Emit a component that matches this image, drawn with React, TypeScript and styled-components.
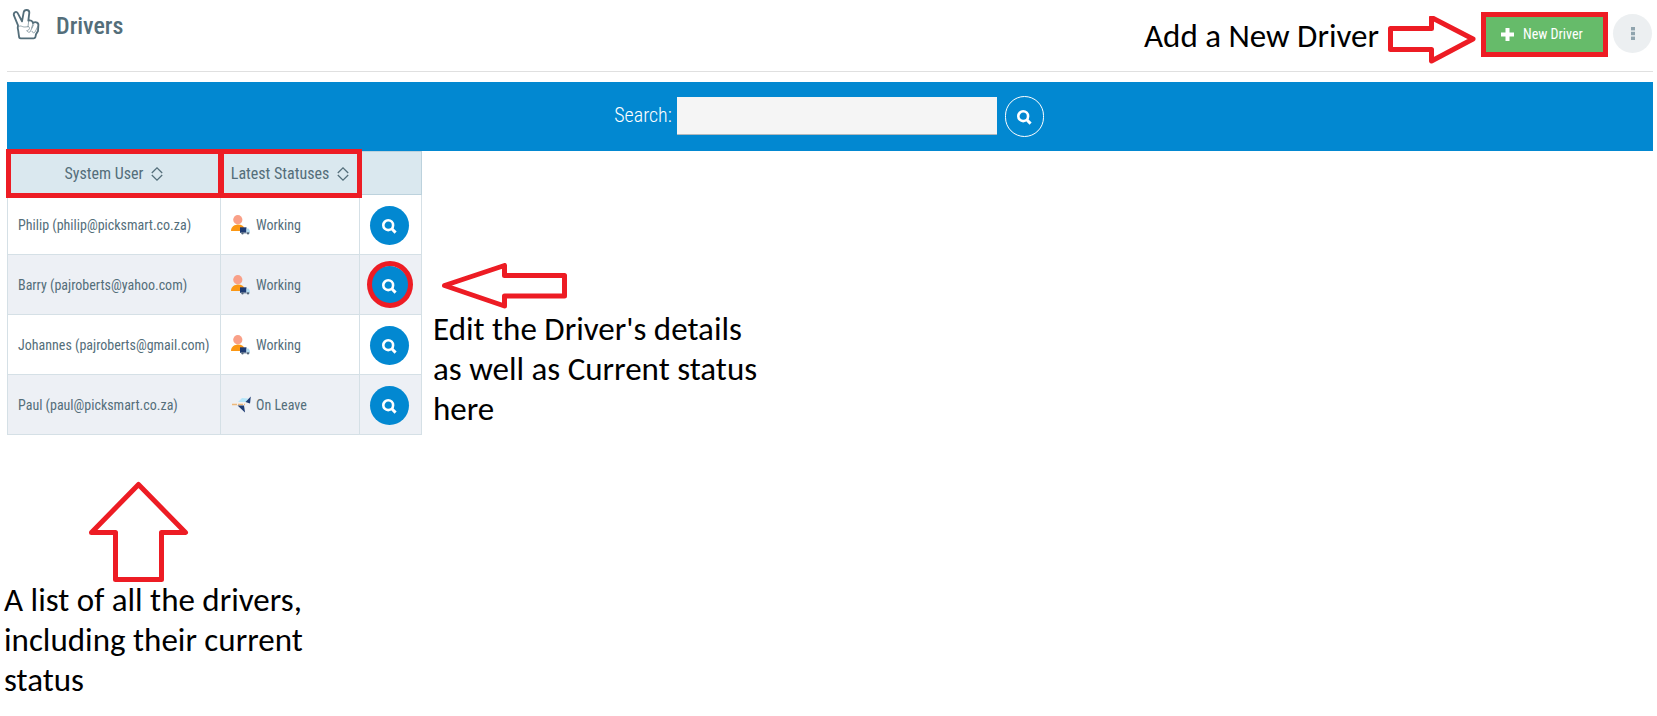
import React from "react";
import styled, { createGlobalStyle } from "styled-components";

const red = "#ed1c24";
const blue = "#0288d1";
const slate = "#546e7a";
const line = "#d5e0e6";

const GlobalStyle = createGlobalStyle`
  * { box-sizing: border-box; }
  body {
    margin: 0;
    background: #fff;
    color: ${slate};
    font: 400 14px/20px "Roboto Condensed", Roboto, sans-serif;
  }
`;

const Page = styled.main`
  padding-bottom: 8px;
`;

const Header = styled.header`
  display: flex;
  justify-content: space-between;
  align-items: flex-start;
  height: 72px;
  margin: 0 4px 10px 7px;
  border-bottom: 1px solid #e0e0e0;
`;

const Brand = styled.div`
  display: flex;
  gap: 16px;
  padding: 8px 0 0 5px;
`;

const Title = styled.h1`
  margin: 0;
  font-size: 24px;
  line-height: 36px;
  font-weight: 500;
`;

const Actions = styled.div`
  display: flex;
  align-items: flex-start;
  gap: 5px;
  padding-top: 12px;
`;

const Note = styled.p`
  margin: 0;
  color: #000;
  font: 400 33px/40px Carlito, Calibri, Lato, sans-serif;
`;

const HeaderNote = styled.div`
  display: flex;
  align-items: flex-start;
  gap: 9px;
  padding-top: 4px;
`;

const NewButton = styled.button`
  display: flex;
  align-items: center;
  gap: 9px;
  width: 127px;
  height: 45px;
  padding: 0 0 1px 15px;
  border: 5px solid ${red};
  background: #66bb6a;
  color: #fff;
  font: inherit;
`;

const MoreButton = styled.button`
  display: grid;
  place-items: center;
  width: 39px;
  height: 39px;
  margin: 2px 1px 0 0;
  padding: 0;
  border: 0;
  border-radius: 50%;
  background: #eceff1;
`;

const SearchBar = styled.form`
  display: flex;
  align-items: center;
  justify-content: center;
  height: 69px;
  margin: 0 4px 0 7px;
  padding: 0 2px 1px 0;
  background: ${blue};
`;

const SearchLabel = styled.label`
  padding-bottom: 3px;
  color: #fff;
  font-size: 20px;
  line-height: 24px;
  font-weight: 300;
`;

const SearchInput = styled.input`
  width: 320px;
  height: 38px;
  margin: 0 8px 0 5px;
  padding: 0 8px;
  border: 0;
  border-bottom: 1px solid #b0b8bd;
  border-radius: 0;
  background: #f5f5f5;
  font: inherit;
`;

const RoundButton = styled.button<{ $outlined?: boolean; $marked?: boolean }>`
  position: relative;
  display: grid;
  place-items: center;
  width: 39px;
  height: ${(p) => (p.$outlined ? 41 : 39)}px;
  padding: 2px 0 0;
  border: ${(p) => (p.$outlined ? "1px solid #fff" : "0")};
  border-radius: 20px;
  background: ${blue};
  color: #fff;
  &::after {
    content: "";
    display: ${(p) => (p.$marked ? "block" : "none")};
    position: absolute;
    inset: -5px -4px -3px -3px;
    border: 5px solid ${red};
    border-radius: 50%;
  }
`;

const Content = styled.div`
  display: flex;
  align-items: flex-start;
  gap: 11px;
  padding-left: 7px;
`;

const Table = styled.table`
  width: 415px;
  table-layout: fixed;
  border-collapse: collapse;
`;

const Col = styled.col<{ $w: number }>`
  width: ${(p) => p.$w}px;
`;

const HeadCell = styled.th<{ $marked?: boolean }>`
  position: relative;
  z-index: ${(p) => (p.$marked ? 1 : 0)};
  height: 43px;
  padding: 2px 0 0;
  border: 1px solid #bcd2dd;
  background: #dae8ef;
  font-size: 16px;
  font-weight: 400;
  &::after {
    content: "";
    display: ${(p) => (p.$marked ? "block" : "none")};
    position: absolute;
    inset: -3px -3px -4px -2px;
    border: 5px solid ${red};
  }
`;

const SortButton = styled.button`
  display: inline-flex;
  align-items: center;
  gap: 8px;
  padding: 0;
  border: 0;
  background: none;
  color: inherit;
  font: inherit;
`;

const Row = styled.tr`
  height: 60px;
  &:nth-child(even) {
    background: #edf0f5;
  }
`;

const Cell = styled.td`
  padding: 1px 10px 0;
  border: 1px solid ${line};
  white-space: nowrap;
`;

const Status = styled.span`
  display: flex;
  align-items: center;
  gap: 5px;
  padding-bottom: 1px;
`;

const EditNote = styled.aside`
  width: 335px;
  padding-top: 112px;
`;

const ListNote = styled.aside`
  width: 306px;
  padding: 47px 0 0 4px;
`;

const Arrow = styled.svg<{ $indent?: number }>`
  display: block;
  flex: none;
  margin-left: ${(p) => p.$indent ?? 0}px;
  fill: none;
  stroke: ${red};
  stroke-width: 5px;
  stroke-linejoin: round;
`;

const HandIcon = () => (
  <svg width="28" height="32" viewBox="36 24 84 96" fill="none" stroke={slate} strokeLinecap="round" strokeLinejoin="round" aria-hidden="true">
    <path strokeWidth="5.5" d="M54 76 L42 47 C39 38 49 30 54 41 L66 64 L71 37 C73 27 88 28 88 38 L85 62 C92 59 98 63 99 69 C108 63 117 69 115 78 L114 93 L108 103 L106 112 C105 115 103 115 101 115 H62 C58 115 57 113 57 109 L55 94 C53 88 52 83 54 76 Z" />
    <path strokeWidth="1.8" d="M56 80 C62 74 67 82 75 81 L86 80 C92 86 86 91 80 92 C83 96 86 98 90 96 L101 74 M86 64 L84 80 M99 70 L95 84 M114 78 L105 96 C102 100 97 99 96 94" />
  </svg>
);

const SearchIcon = () => (
  <svg width="15" height="15" viewBox="0 0 15 15" fill="none" stroke="currentColor" aria-hidden="true">
    <circle cx="6.2" cy="6.2" r="4.9" strokeWidth="2.6" />
    <path d="M9.8 9.8 L13.6 13.6" strokeWidth="3" />
  </svg>
);

const SortIcon = () => (
  <svg width="12" height="14" viewBox="0 0 12 14" fill="none" stroke="currentColor" strokeWidth="1.3" aria-hidden="true">
    <path d="M0.8 6 L6 0.9 L11.2 6 M0.8 8 L6 13.1 L11.2 8" />
  </svg>
);

const DriverIcon = () => (
  <svg width="20" height="20" viewBox="0 0 20 20" aria-hidden="true">
    <circle cx="6.8" cy="4.7" r="4.6" fill="#f9a088" />
    <path d="M0 16 C0 8 12.500 8 13 13 L9 13 V16 Z" fill="#fb9714" />
    <rect x="9" y="12.300" width="6.500" height="5.500" fill="#1d3b72" />
    <path d="M15.500 13.500 H17.500 L19 15.800 V18.300 H15.500 Z" fill="#b3ddf2" />
    <path d="M10 18 H18.500" stroke="#8b9bab" />
    <circle cx="11.500" cy="18.400" r="1.100" fill="#53657a" />
    <circle cx="17" cy="18.400" r="1.100" fill="#53657a" />
  </svg>
);

const PlaneIcon = () => (
  <svg width="20" height="20" viewBox="0 0 20 20" aria-hidden="true">
    <path d="M7 7 L11 3 L17 3.500 L15 7 Z" fill="#b5e6fa" />
    <path d="M0 9 C3 7 10 7.500 16 7 L19 6 C17 10 11 11.500 2 10.500 Z" fill="#f4f0ec" />
    <path d="M1 9.600 H14" stroke="#ecb87c" strokeWidth="1.500" strokeDasharray="5 1" />
    <path d="M19.800 1.500 L19 8.500 L14.500 7 Z" fill="#1d3b72" />
    <path d="M6.500 10.500 L13 10.500 L14 17.500 Z" fill="#1d3b72" />
  </svg>
);

const drivers = [
  { user: "Philip (philip@picksmart.co.za)", status: "Working" },
  { user: "Barry (pajroberts@yahoo.com)", status: "Working", marked: true },
  { user: "Johannes (pajroberts@gmail.com)", status: "Working" },
  { user: "Paul (paul@picksmart.co.za)", status: "On Leave" },
];

export default function App() {
  return (
    <Page>
      <GlobalStyle />
      <Header>
        <Brand>
          <HandIcon />
          <Title>Drivers</Title>
        </Brand>
        <Actions>
          <HeaderNote>
            <Note>Add a New Driver</Note>
            <Arrow width="88" height="48" viewBox="0 1 88 48" aria-hidden="true">
              <path d="M2.500 13.500 H43.500 V2.500 L85 24 L43.500 46 V34.500 H2.500 Z" />
            </Arrow>
          </HeaderNote>
          <NewButton type="button">
            <svg width="13" height="13" viewBox="0 0 13 13" stroke="currentColor" strokeWidth="4" aria-hidden="true">
              <path d="M6.500 0 V13 M0 6.500 H13" />
            </svg>
            New Driver
          </NewButton>
          <MoreButton type="button" aria-label="More options">
            <svg width="4" height="13" viewBox="0 0 4 13" fill="#90a4ae" aria-hidden="true">
              <rect width="4" height="3.400" />
              <rect y="4.800" width="4" height="3.400" />
              <rect y="9.600" width="4" height="3.400" />
            </svg>
          </MoreButton>
        </Actions>
      </Header>
      <SearchBar role="search" onSubmit={(e) => e.preventDefault()}>
        <SearchLabel htmlFor="search">Search:</SearchLabel>
        <SearchInput id="search" type="text" />
        <RoundButton type="submit" $outlined aria-label="Search">
          <SearchIcon />
        </RoundButton>
      </SearchBar>
      <Content>
        <Table>
          <colgroup>
            <Col $w={213} />
            <Col $w={139} />
            <Col $w={62} />
          </colgroup>
          <thead>
            <tr>
              <HeadCell $marked>
                <SortButton type="button">System User <SortIcon /></SortButton>
              </HeadCell>
              <HeadCell $marked>
                <SortButton type="button">Latest Statuses <SortIcon /></SortButton>
              </HeadCell>
              <HeadCell aria-label="Details" />
            </tr>
          </thead>
          <tbody>
            {drivers.map((d) => (
              <Row key={d.user}>
                <Cell>{d.user}</Cell>
                <Cell>
                  <Status>
                    {d.status === "Working" ? <DriverIcon /> : <PlaneIcon />}
                    {d.status}
                  </Status>
                </Cell>
                <Cell>
                  <RoundButton type="button" $marked={d.marked} aria-label={`View ${d.user}`}>
                    <SearchIcon />
                  </RoundButton>
                </Cell>
              </Row>
            ))}
          </tbody>
        </Table>
        <EditNote>
          <Arrow $indent={9} width="126" height="46" viewBox="0 0 126 46" aria-hidden="true">
            <path d="M2.500 22.500 L62.500 2.500 V12.500 H122.500 V33 H62.500 V43 Z" />
          </Arrow>
          <Note>Edit the Driver's details as well as Current status here</Note>
        </EditNote>
      </Content>
      <ListNote>
        <Arrow $indent={85} width="100" height="98" viewBox="0 0 100 98" overflow="visible" aria-hidden="true">
          <path d="M49.500 2.500 L96.500 50.500 H72.500 V97.500 H26.500 V50.500 H2.500 Z" />
        </Arrow>
        <Note>A list of all the drivers, including their current status</Note>
      </ListNote>
    </Page>
  );
}
